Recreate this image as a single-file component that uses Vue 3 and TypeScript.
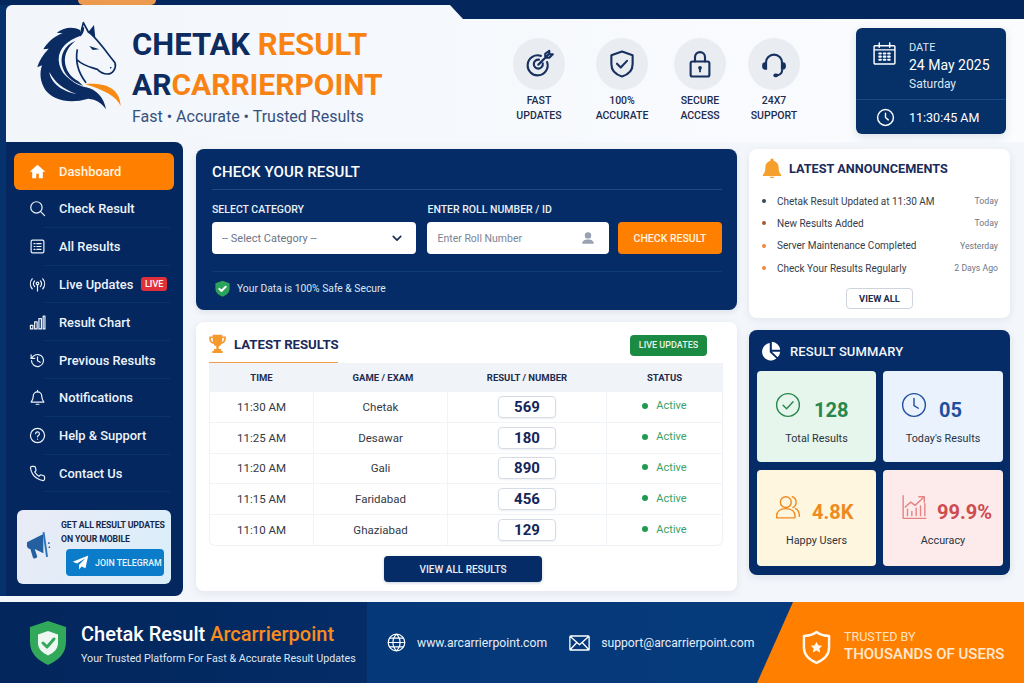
<script setup lang="ts">
interface NavItem { label: string; paths: string[]; active?: boolean; live?: boolean }
const circle = (cx: number, cy: number, r: number) =>
  `M${cx - r} ${cy}a${r} ${r} 0 1 0 ${r * 2} 0a${r} ${r} 0 1 0 ${-r * 2} 0z`

const nav: NavItem[] = [
  { label: 'Dashboard', active: true, paths: ['M12 2.500 1 12.500H4.500v9h5.700V15h3.600v6.500h5.700v-9H23z'] },
  { label: 'Check Result', paths: [circle(10.5, 10.5, 8), 'M16.500 16.500 22 22'] },
  { label: 'All Results', paths: ['M5 3h14a2 2 0 0 1 2 2v14a2 2 0 0 1-2 2H5a2 2 0 0 1-2-2V5a2 2 0 0 1 2-2z', 'M7 8h1.500M11 8h6M7 12h1.500M11 12h6M7 16h1.500M11 16h6'] },
  { label: 'Live Updates', live: true, paths: [circle(12, 10.5, 1.8), 'M12 12.500V21M8 7a6 6 0 0 0 0 8M16 7a6 6 0 0 1 0 8M4.500 4a11 11 0 0 0 0 14M19.500 4a11 11 0 0 1 0 14'] },
  { label: 'Result Chart', paths: ['M2 16h3.500v5H2zM8 11h3.500v10H8zM14 6.500h3.500V21H14zM20 3h2.500v18H20z'] },
  { label: 'Previous Results', paths: ['M3.500 12a8.500 8.500 0 1 0 2.600-6.100L3 9', 'M3 4v5h5M12 7v5.300l3.800 2.200'] },
  { label: 'Notifications', paths: ['M6 10a6 6 0 0 1 12 0c0 5 2 7 3 8.500H3c1-1.500 3-3.500 3-8.500z', 'M10 21.500h4M12 2v2'] },
  { label: 'Help & Support', paths: [circle(12, 12, 10), 'M9.300 9.500a2.700 2.700 0 1 1 4 2.400c-.9.500-1.300 1-1.300 2M12 17v.3'] },
  { label: 'Contact Us', paths: ['M22 16.920v3a2 2 0 0 1-2.180 2 19.790 19.790 0 0 1-8.630-3.070 19.500 19.500 0 0 1-6-6 19.790 19.790 0 0 1-3.070-8.670A2 2 0 0 1 4.110 2h3a2 2 0 0 1 2 1.720 12.840 12.840 0 0 0 .7 2.810 2 2 0 0 1-.45 2.110L8.090 9.910a16 16 0 0 0 6 6l1.270-1.270a2 2 0 0 1 2.110-.45 12.840 12.840 0 0 0 2.810.7A2 2 0 0 1 22 16.920z'] },
]

const features = [
  { a: 'FAST', b: 'UPDATES', paths: [ 'M18.500 10.500a8 8 0 1 1-5-5', 'M15 11.500a3.600 3.600 0 1 1-3-3', 'M11.500 12.500 20 4M17 3.800V7h3.200L23 4.200h-2.800V1.500z'] },
  { a: '100%', b: 'ACCURATE', paths: ['M12 2 20.500 5v7c0 5-3.500 8.500-8.500 10-5-1.500-8.500-5-8.500-10V5z', 'M8 11.800l3 3 5-5.300'] },
  { a: 'SECURE', b: 'ACCESS', paths: ['M6 10h12a1.500 1.500 0 0 1 1.500 1.500v9A1.500 1.500 0 0 1 18 22H6a1.500 1.500 0 0 1-1.500-1.500v-9A1.500 1.500 0 0 1 6 10z', 'M8 10V6.500a4 4 0 0 1 8 0V10'], solid: [circle(12, 15, 1.5), 'M11.300 15h1.400v3.500h-1.400z'] },
  { a: '24X7', b: 'SUPPORT', paths: ['M5.500 12v-1a6.500 6.500 0 0 1 13 0v1', 'M18.500 17c0 2.500-2.300 4-5 4'], solid: ['M5 10.500h1.500v6H5a2.500 2.500 0 0 1-2.500-2.500v-1A2.500 2.500 0 0 1 5 10.500z', 'M19 10.500h-1.500v6H19a2.500 2.500 0 0 0 2.500-2.500v-1a2.500 2.500 0 0 0-2.500-2.500z', 'M13 19.500h.8a1.500 1.500 0 0 1 0 3H13a1.500 1.500 0 0 1 0-3z'] },
]

const results = [
  { time: '11:30 AM', game: 'Chetak', num: '569' },
  { time: '11:25 AM', game: 'Desawar', num: '180' },
  { time: '11:20 AM', game: 'Gali', num: '890' },
  { time: '11:15 AM', game: 'Faridabad', num: '456' },
  { time: '11:10 AM', game: 'Ghaziabad', num: '129' },
]

const news = [
  { text: 'Chetak Result Updated at 11:30 AM', when: 'Today', tone: 'dark' },
  { text: 'New Results Added', when: 'Today', tone: 'brown' },
  { text: 'Server Maintenance Completed', when: 'Yesterday', tone: 'orange' },
  { text: 'Check Your Results Regularly', when: '2 Days Ago', tone: 'orange' },
]

const stats = [
  { value: '128', label: 'Total Results', tone: 'green', paths: [circle(12, 12, 10.5), 'M7.500 12.300l3.200 3.200 6-6.500'] },
  { value: '05', label: "Today's Results", tone: 'blue', paths: [circle(12, 12, 10.5), 'M12 6v6.500l4 2.500'] },
  { value: '4.8K', label: 'Happy Users', tone: 'amber', paths: [circle(10, 7.5, 5), 'M1.500 22v-1.500C1.500 16 5 13.500 10 13.500s8.500 2.500 8.500 7V22z', 'M16 2.500c2.500.8 3.500 3 3.500 5s-1 4-3 5M19 13.500c2.500 1 3.500 3.500 3.500 7'] },
  { value: '99.9%', label: 'Accuracy', tone: 'red', paths: ['M2 1.500V22.500H23', 'M6 20v-6M10 20v-4M14 20v-7M18 20v-9M22 20V9', 'M4 12l5-4.500 4 3L21 3', 'M16.500 2.500H21.500V7.500'] },
]
</script>

<template>
  <div class="page">
    <div class="topline"><span class="glow"></span></div>
    <div class="frame">
      <header class="head">
        <span class="wedge"></span>
        <div class="brand">
          <svg class="logo" viewBox="0 0 360 330" width="120" height="110" aria-label="Horse logo">
            <path fill="#0b2c63" d="M180 60C160 50 135 50 110 68L128 70C100 80 82 98 70 118L86 116C68 135 56 155 52 172L66 166C58 190 60 215 76 240C100 272 150 282 205 266C228 268 246 280 258 298C252 262 228 238 198 232C160 225 125 190 118 150C115 125 135 95 182 84Z"/>
            <path fill="#f3f6fb" d="M180 78 190 38 205 66C228 80 258 125 285 158C290 175 278 192 262 192C250 192 240 186 232 178C215 172 190 168 172 150C172 172 185 200 205 222L190 226C150 215 118 190 116 150C115 115 145 90 180 78Z"/>
            <path fill="#0b2c63" d="M166 93C134 106 120 134 126 165C132 195 156 216 190 228L175 214C150 200 138 180 135 158C132 132 145 110 166 93Z"/>
            <path fill="#f3f6fb" d="M88 186C92 218 125 244 170 252C130 238 105 218 88 186Z"/>
            <path fill="none" stroke="#0b2c63" stroke-width="5" stroke-linejoin="round" d="M180 78 190 38 205 66C228 80 258 125 285 158C290 175 278 192 262 192C250 192 240 186 232 178C215 172 190 168 172 150M172 118C166 150 170 182 198 218M181 76C188 70 190 62 190 52"/>
            <path fill="#0b2c63" d="M205 66 222 45 226 84ZM208 108 238 118 218 120ZM270 170l6 3-6 3z"/>
            <path fill="#f98b14" d="M195 222C240 218 300 225 302 288C290 258 250 240 195 222Z"/>
          </svg>
          <div class="brand-text">
            <div class="brand-line"><span class="navy">CHETAK</span> <span class="orange">RESULT</span></div>
            <div class="brand-line second"><span class="navy">AR</span><span class="orange">CARRIERPOINT</span></div>
            <div class="tagline">Fast • Accurate • Trusted Results</div>
          </div>
        </div>
        <div class="features">
          <div v-for="f in features" :key="f.a" class="feature">
            <span class="feature-icon">
              <svg viewBox="0 0 24 24" width="30" height="30" fill="none" stroke="#17305f" stroke-width="1.700" stroke-linecap="round" stroke-linejoin="round">
                <path v-for="p in f.paths" :key="p" :d="p"/>
                <path v-for="p in f.solid ?? []" :key="p" :d="p" fill="#17305f" stroke="none"/>
              </svg>
            </span>
            <span class="feature-label">{{ f.a }}<br>{{ f.b }}</span>
          </div>
        </div>
        <div class="date-card">
          <div class="date-top">
            <svg viewBox="0 0 24 24" width="25" height="25" fill="none" stroke="#fff" stroke-width="1.400" stroke-linecap="round">
              <path d="M3 4.500h18a1 1 0 0 1 1 1V21a1 1 0 0 1-1 1H3a1 1 0 0 1-1-1V5.500a1 1 0 0 1 1-1zM2 8.500h20M7 2v4M17 2v4"/>
              <path stroke-width="2" d="M7 12h1.500M11.300 12h1.500M15.500 12h1.500M7 15h1.500M11.300 15h1.500M15.500 15h1.500M7 18h1.500M11.300 18h1.500M15.500 18h1.500"/>
            </svg>
            <div class="date-text">
              <div class="date-cap">DATE</div>
              <div class="date-main">24 May 2025</div>
              <div class="date-day">Saturday</div>
            </div>
          </div>
          <div class="date-bottom">
            <svg viewBox="0 0 24 24" width="19" height="19" fill="none" stroke="#fff" stroke-width="1.800" stroke-linecap="round" stroke-linejoin="round">
              <path :d="circle(12, 12, 10)"/><path d="M12 6.500V12l3.500 3"/>
            </svg>
            <span class="date-time">11:30:45 AM</span>
          </div>
        </div>
      </header>

      <main class="main">
        <aside class="side">
          <nav class="nav">
            <a v-for="n in nav" :key="n.label" class="nav-item" :class="{ active: n.active }">
              <svg viewBox="0 0 24 24" width="17" height="17" :fill="n.active ? '#fff' : 'none'" :stroke="n.active ? 'none' : '#eef3fb'" stroke-width="1.700" stroke-linecap="round" stroke-linejoin="round">
                <path v-for="p in n.paths" :key="p" :d="p"/>
              </svg>
              <span>{{ n.label }}</span>
              <b v-if="n.live" class="live">LIVE</b>
            </a>
          </nav>
          <div class="promo">
            <svg class="mega" viewBox="0 0 28 30" width="27" height="29">
              <path fill="#24609f" d="M1 11.500 18 3v20L9 18.500l2.500 7.500a1.500 1.500 0 0 1-1 2l-1.500.4a1.500 1.500 0 0 1-1.800-1L4.500 18.500H4a3.500 3.500 0 0 1-3-3.500z"/>
              <path fill="#2b74ba" d="M19 1h2v26h-2z" transform="rotate(-8 20 14)"/>
              <path fill="#24609f" d="M23 11.500h1.500v2H23zM23.500 16h1.500v1.500h-1.500z"/>
            </svg>
            <div class="promo-body">
              <div class="promo-text">GET ALL RESULT UPDATES<br>ON YOUR MOBILE</div>
              <div class="tg-btn">
                <svg viewBox="0 0 24 24" width="17" height="17"><path fill="#fff" d="M23 2 1 11l6 2.500L19 6 10 15v7l3.500-4.500L19 20z"/></svg>
                <span>JOIN TELEGRAM</span>
              </div>
            </div>
          </div>
        </aside>

        <section class="center">
          <div class="check">
            <h2 class="check-title">CHECK YOUR RESULT</h2>
            <div class="check-form">
              <label class="field f1">
                <span>SELECT CATEGORY</span>
                <span class="box">
                  <em>-- Select Category --</em>
                  <svg viewBox="0 0 12 8" width="10" height="7" fill="none" stroke="#14294f" stroke-width="1.900" stroke-linecap="round" stroke-linejoin="round"><path d="M1.500 1.500 6 6l4.500-4.500"/></svg>
                </span>
              </label>
              <label class="field f2">
                <span>ENTER ROLL NUMBER / ID</span>
                <span class="box">
                  <em class="small">Enter Roll Number</em>
                  <svg viewBox="0 0 24 24" width="14" height="14" fill="#98a2b3"><path d="M12 2a5.500 5.500 0 1 1 0 11 5.500 5.500 0 0 1 0-11zM2 22c0-5 4-7.500 10-7.500S22 17 22 22z"/></svg>
                </span>
              </label>
              <button class="check-btn">CHECK RESULT</button>
            </div>
            <div class="safe">
              <svg viewBox="0 0 24 24" width="17" height="19"><path fill="#2ba35a" d="M12 1 22 4.500V12c0 5.500-4 9.500-10 11.500C6 21.500 2 17.500 2 12V4.500z"/><path fill="none" stroke="#fff" stroke-width="2.800" stroke-linecap="round" stroke-linejoin="round" d="M7.500 12.500l3 3 6-6"/></svg>
              <span>Your Data is 100% Safe &amp; Secure</span>
            </div>
          </div>

          <div class="latest">
            <div class="latest-head">
              <div class="latest-title">
                <svg viewBox="0 0 24 24" width="19" height="19"><path fill="#f5992c" d="M6 1h12v2h4.500v3c0 3.500-2.500 6-5.500 6.500-.8 1.500-2 2.500-3.500 3V19h3v2.500h2V24H5.500v-2.500h2V19h3v-3.500C9 15 7.800 14 7 12.500 4 12 1.500 9.500 1.500 6V3H6zM3.700 5v1c0 2 1.200 3.500 2.800 4.200C6.200 9 6 7 6 5zM20.300 5H18c0 2-.2 4-.5 5.200C19.100 9.500 20.300 8 20.300 6z"/></svg>
                <span>LATEST RESULTS</span>
              </div>
              <span class="pill">LIVE UPDATES</span>
            </div>
            <div class="table">
              <div class="tr th"><span>TIME</span><span class="game-h">GAME / EXAM</span><span>RESULT / NUMBER</span><span>STATUS</span></div>
              <div v-for="r in results" :key="r.num" class="tr">
                <span class="time">{{ r.time }}</span>
                <span class="game">{{ r.game }}</span>
                <span><b class="num">{{ r.num }}</b></span>
                <span class="status"><i></i><small>Active</small></span>
              </div>
            </div>
            <button class="all-btn">VIEW ALL RESULTS</button>
          </div>
        </section>

        <section class="right">
          <div class="ann">
            <div class="ann-title">
              <svg viewBox="0 0 24 24" width="20" height="20"><path fill="#f5a02c" d="M12 0.500a2 2 0 0 1 2 2v.8c3.800 1 6 4 6 8 0 4.700 1 6.700 3 8.700v1.500H1V20c2-2 3-4 3-8.700 0-4 2.200-7 6-8v-.8a2 2 0 0 1 2-2zM9 22.500h6a3 1.500 0 0 1-6 0z"/></svg>
              <span>LATEST ANNOUNCEMENTS</span>
            </div>
            <ul class="news">
              <li v-for="n in news" :key="n.text">
                <i :class="n.tone"></i><span class="news-text">{{ n.text }}</span><span class="news-when">{{ n.when }}</span>
              </li>
            </ul>
            <button class="view-all">VIEW ALL</button>
          </div>

          <div class="summary">
            <div class="summary-title">
              <svg viewBox="0 0 24 24" width="20" height="20"><path fill="#fff" d="M10.500 2.500V13.500L18.500 21A10.500 10.500 0 1 1 10.500 2.500zM13 1a10.500 10.500 0 0 1 10 9.500H13zM13 13h10a10.300 10.300 0 0 1-3 6.500z"/></svg>
              <span>RESULT SUMMARY</span>
            </div>
            <div class="stats">
              <div v-for="s in stats" :key="s.label" class="stat" :class="s.tone">
                <div class="stat-row">
                  <svg viewBox="0 0 24 24" width="26" height="26" fill="none" stroke="currentColor" stroke-width="1.300" stroke-linecap="round" stroke-linejoin="round">
                    <path v-for="p in s.paths" :key="p" :d="p"/>
                  </svg>
                  <strong>{{ s.value }}</strong>
                </div>
                <div class="stat-label">{{ s.label }}</div>
              </div>
            </div>
          </div>
        </section>
      </main>
    </div>

    <footer class="foot">
      <div class="foot-brand">
        <svg viewBox="0 0 38 46" width="38" height="46">
          <path fill="#31a85a" d="M19 1 37 7v15c0 11-7 18-18 23C8 40 1 33 1 22V7z"/>
          <path fill="#eef7f1" d="M19 11l10 3.500v8.500c0 6-4 9.500-10 12.500-6-3-10-6.500-10-12.500v-8.500z"/>
          <path fill="none" stroke="#31a85a" stroke-width="3" stroke-linecap="round" stroke-linejoin="round" d="M14 23l4 4 7-8"/>
        </svg>
        <div>
          <div class="foot-title">Chetak Result <span>Arcarrierpoint</span></div>
          <div class="foot-sub">Your Trusted Platform For Fast &amp; Accurate Result Updates</div>
        </div>
      </div>
      <div class="foot-contact">
        <svg viewBox="0 0 24 24" width="19" height="19" fill="none" stroke="#fff" stroke-width="1.500"><path :d="circle(12, 12, 10.5)"/><path d="M1.500 12h21M3 6.500h18M3 17.500h18M12 1.500c-6 6-6 15 0 21M12 1.500c6 6 6 15 0 21"/></svg>
        <span class="site">www.arcarrierpoint.com</span>
        <svg viewBox="0 0 24 18" width="21" height="16" fill="none" stroke="#fff" stroke-width="1.500" stroke-linejoin="round"><path d="M2 1h20a1 1 0 0 1 1 1v14a1 1 0 0 1-1 1H2a1 1 0 0 1-1-1V2a1 1 0 0 1 1-1zM1.500 1.500 12 11 22.500 1.500M1.500 16.500 9 8.500M22.500 16.500 15 8.500"/></svg>
        <span>support@arcarrierpoint.com</span>
      </div>
      <div class="foot-trust">
        <svg viewBox="0 0 30 36" width="29" height="35"><path fill="none" stroke="#fff8f0" stroke-width="2.500" stroke-linejoin="round" d="M15 2C18 4.500 23 6 28 6v12c0 7-5 12.500-13 16C7 30.500 2 25 2 18V6c5 0 10-1.500 13-4z"/><path fill="#fff8f0" d="m15 12 1.800 3.800 4.200.5-3.100 2.800.9 4.200-3.800-2.200-3.800 2.200.9-4.200-3.100-2.800 4.200-.5z"/></svg>
        <div>
          <div class="trust-cap">TRUSTED BY</div>
          <div class="trust-main">THOUSANDS OF USERS</div>
        </div>
      </div>
    </footer>
  </div>
</template>

<style>
html, body { margin: 0; padding: 0; background: #f3f6fa; }
</style>

<style scoped>
* { box-sizing: border-box; }
.page { width: 1024px; height: 683px; overflow: hidden; display: flex; flex-direction: column; font-family: Roboto, "Liberation Sans", sans-serif; background: #f3f6fa; }
.topline { height: 5px; background: #03265c; position: relative; flex: none; }
.glow { position: absolute; left: 78px; top: 0; width: 78px; height: 5px; background: #ec9a4e; border-radius: 0 0 10px 10px; }
.frame { height: 597px; flex: none; background: linear-gradient(#05316d 0 591px, #f3f6fa 591px); padding-left: 6px; display: flex; flex-direction: column; }
.head { height: 137px; flex: none; position: relative; background: linear-gradient(90deg, #f2f6fb, #fbfcfe); border-top-left-radius: 6px; display: flex; align-items: flex-start; }
.wedge { position: absolute; right: 0; top: 0; width: 574px; height: 14px; background: #03265c; clip-path: polygon(0 0, 100% 0, 100% 100%, 13px 100%); }
.brand { display: flex; width: 491px; padding: 5px 0 0 14px; flex: none; }
.logo { flex: none; margin-right: -8px; }
.brand-text { margin-top: 15px; }
.brand-line { font-size: 31px; font-weight: 700; line-height: 39.500px; white-space: nowrap; }
.brand-line.second { font-size: 30px; }
.navy { color: #0c2b5e; }
.orange { color: #f98312; }
.tagline { color: #35517d; font-size: 16px; line-height: 22px; margin-top: 2px; white-space: nowrap; }
.features { display: grid; grid-template-columns: 84px 82px 74px 74px; margin-top: 33px; flex: none; }
.feature { display: flex; flex-direction: column; align-items: center; }
.feature-icon { width: 52px; height: 52px; border-radius: 50%; background: #e9edf2; display: flex; align-items: center; justify-content: center; }
.feature-label { margin-top: 4px; font-size: 10.500px; line-height: 14.500px; font-weight: 500; text-align: center; color: #1d2c4f; white-space: nowrap; }
.date-card { position: absolute; left: 850px; top: 23px; width: 150px; height: 106px; background: #053068; border-radius: 6px; color: #fff; box-shadow: 0 3px 8px rgba(20, 50, 90, .12); }
.date-top { height: 72px; padding: 13px 0 0 16px; display: flex; gap: 12px; border-bottom: 1px solid #1c4a84; }
.date-cap { font-size: 11px; line-height: 14px; color: #dbe6f3; }
.date-main { font-size: 14px; line-height: 19px; margin-top: 1px; font-weight: 400; white-space: nowrap; }
.date-day { font-size: 12px; line-height: 16px; margin-top: 1px; color: #dbe6f3; }
.date-bottom { display: flex; align-items: center; gap: 14px; padding: 8px 0 0 20px; }
.date-time { font-size: 12.500px; font-weight: 400; }
.main { flex: 1; min-height: 0; display: grid; grid-template-columns: 177px 542px 261px; column-gap: 12px; background: #f3f6fa; align-items: start; }
.side { height: 454px; background: #03275e; border-radius: 0 8px 8px 0; padding: 11px 9px 12px 8px; display: flex; flex-direction: column; }
.nav { display: flex; flex-direction: column; }
.nav-item { height: 37.800px; flex: none; display: flex; align-items: center; color: #eef3fb; font-size: 12.900px; font-weight: 500; padding-left: 15px; gap: 13px; position: relative; white-space: nowrap; border-radius: 6px; }
.nav-item + .nav-item::after { content: ""; position: absolute; left: 30px; right: 4px; bottom: 0; height: 1px; background: #0a326d; }
.nav-item.active { height: 37px; background: #ff8000; color: #fff3e0; }
.live { position: absolute; left: 127px; background: #e0303a; color: #fff; border-radius: 3px; font-size: 9px; font-weight: 500; padding: 2px 4px; line-height: 10px; }
.promo { margin: auto 3px 0 3px; height: 74px; border-radius: 6px; background: linear-gradient(120deg, #e9ebf6, #d9eefa); display: flex; gap: 8px; padding: 8px 6px 8px 9px; }
.mega { flex: none; margin-top: 13px; }
.promo-body { display: flex; flex-direction: column; align-items: flex-end; min-width: 0; }
.promo-text { font-size: 8.700px; font-weight: 700; color: #17284a; line-height: 14px; letter-spacing: -.1px; width: 103px; white-space: nowrap; }
.tg-btn { margin-top: 3px; width: 98px; height: 28px; background: #0b7cc9; border-radius: 4px; display: flex; align-items: center; gap: 6px; padding-left: 6px; color: #e9f4fc; font-size: 8.800px; font-weight: 500; white-space: nowrap; }
.center { display: flex; flex-direction: column; gap: 12px; padding: 7px 0 0 1px; }
.check { height: 161px; background: #052c66; border-radius: 8px; padding: 0 15px 0 16px; color: #fff; box-shadow: 0 2px 6px rgba(20, 50, 90, .1); }
.check-title { margin: 0; height: 41px; line-height: 46px; font-size: 15px; font-weight: 500; border-bottom: 1px solid #1c4a84; letter-spacing: .1px; }
.check-form { height: 82px; display: flex; align-items: flex-start; padding-top: 13px; border-bottom: 1px solid #0e3a76; }
.field { display: flex; flex-direction: column; gap: 6px; font-size: 10.500px; font-weight: 500; line-height: 13px; color: #eaf0f8; white-space: nowrap; }
.f1 { width: 205px; margin-right: 11px; }
.f2 { width: 182px; margin-right: 9px; }
.box { height: 32px; background: #fff; border-radius: 4px; display: flex; align-items: center; justify-content: space-between; padding: 0 14px 0 10px; }
.box em { font-style: normal; font-size: 11px; color: #6d7586; font-weight: 400; }
.box em.small { font-size: 10.500px; color: #7d8494; }
.check-btn { margin-top: 19px; width: 104px; height: 32px; flex: none; border: 0; border-radius: 4px; background: #ff8000; color: #fff3e0; font: 500 10.500px Roboto, sans-serif; }
.safe { display: flex; align-items: center; gap: 6px; padding: 7px 0 0 2px; font-size: 10.300px; color: #dde6f2; }
.latest { height: 269px; background: #fff; border-radius: 8px; padding: 13px 14px 0 13px; box-shadow: 0 2px 8px rgba(20, 50, 90, .08); display: flex; flex-direction: column; align-items: center; }
.latest-head { width: 100%; height: 28px; display: flex; justify-content: space-between; align-items: flex-start; padding-right: 16px; flex: none; }
.latest-title { height: 28px; width: 129px; display: flex; gap: 7px; color: #1a2a5a; font-size: 13.200px; font-weight: 700; white-space: nowrap; border-bottom: 1px solid #f09a4a; align-items: flex-start; line-height: 20px; }
.latest-title svg { margin-top: -1px; margin-left: -1px; flex: none; }
.pill { background: #1b8a42; color: #e5f5ea; height: 21px; width: 77px; border-radius: 4px; text-align: center; line-height: 21px; font-size: 9px; font-weight: 500; }
.table { width: 100%; height: 183px; margin-top: 0; border: 1px solid #eef1f6; border-top: 0; border-radius: 0 0 6px 6px; overflow: hidden; flex: none; }
.tr { display: grid; grid-template-columns: 104px 134px 159px 1fr; height: 30.800px; border-top: 1px solid #f0f3f7; text-align: center; align-items: center; font-size: 11.500px; color: #333a45; }
.tr > span { height: 100%; display: flex; align-items: center; justify-content: center; border-right: 1px solid #f0f3f7; }
.tr > span:last-child { border-right: 0; }
.th { height: 28px; border-top: 0; background: #f0f4f9; font-size: 9.500px; font-weight: 700; color: #1d2c4f; }
.th .game-h { padding-left: 5px; }
.num { width: 58px; height: 22px; border: 1px solid #d6dce5; border-radius: 4px; color: #14265a; font-size: 15px; font-weight: 700; line-height: 20px; box-shadow: 0 1px 2px rgba(20, 50, 90, .08); }
.tr > .status { gap: 8px; padding-right: 0; }
.status small { color: #3aa266; font-size: 11px; margin-top: -2px; }
.status i { width: 6px; height: 6px; border-radius: 50%; background: #1f9a50; margin-top: -2px; }
.all-btn { margin-top: 10px; width: 158px; height: 26px; background: #052c66; border: 0; border-radius: 4px; color: #e8eef7; font: 500 10px Roboto, sans-serif; margin-left: -6px; box-shadow: 0 1px 3px rgba(20, 50, 90, .25); }
.right { display: flex; flex-direction: column; gap: 12px; padding-top: 7px; }
.ann { height: 169px; background: #fff; border-radius: 8px; padding: 9px 12px 0 14px; box-shadow: 0 2px 8px rgba(20, 50, 90, .08); display: flex; flex-direction: column; align-items: center; }
.ann-title { width: 100%; display: flex; align-items: center; gap: 7px; color: #1a2a5a; font-size: 12.700px; font-weight: 700; height: 20px; white-space: nowrap; }
.ann-title svg { margin-left: -1px; }
.news { list-style: none; margin: 12px 0 0; padding: 0; width: 100%; flex: none; }
.news li { height: 22.300px; display: flex; align-items: center; font-size: 10px; color: #343c4b; }
.news i { width: 4px; height: 4px; border-radius: 50%; margin-right: 10px; flex: none; margin-left: -1px; }
.news i.dark { background: #3b4657; }
.news i.brown { background: #a65a35; }
.news i.orange { background: #ef8a3d; }
.news-text { flex: 1; white-space: nowrap; margin-left: 1px; }
.news-when { font-size: 8.700px; color: #6e7686; }
.view-all { margin-top: 9px; width: 67px; height: 21px; border: 1px solid #ced4de; background: #fff; border-radius: 4px; color: #1d2c4f; font: 700 9.300px Roboto, sans-serif; margin-left: -2px; }
.summary { height: 245px; background: #052c66; border-radius: 8px; padding: 0 7px 0 8px; box-shadow: 0 2px 8px rgba(20, 50, 90, .1); }
.summary-title { height: 41px; display: flex; align-items: center; gap: 9px; color: #f3f6fb; font-size: 13px; font-weight: 500; padding: 1px 0 0 4px; letter-spacing: .1px; }
.stats { display: grid; grid-template-columns: 119px 120px; grid-template-rows: 91px 96px; gap: 8px 7px; }
.stat { border-radius: 4px; display: flex; flex-direction: column; padding-top: 20px; }
.stat-row { display: flex; align-items: center; height: 36px; padding-left: 18px; }
.stat-row svg { margin-top: -8px; flex: none; }
.stat-row strong { font-size: 20px; font-weight: 700; margin-top: 2px; }
.stat-label { margin-top: 5px; font-size: 10.800px; color: #2a3340; text-align: center; }
.stat.green { background: #e6f6ec; color: #26884c; }
.stat.blue { background: #e9f2fd; color: #1f4f9e; }
.stat.green strong { margin-left: 13px; }
.stat.blue strong { margin-left: 12px; }
.stat.amber { background: #fff6df; color: #ee8a1e; padding-top: 23px; }
.stat.red { background: #fdeaea; color: #cd4c4f; padding-top: 23px; }
.stat.amber strong { margin-left: 11px; }
.stat.red strong { margin-left: 10px; }
.stat.red svg { color: #e58385; }
.foot { height: 81px; flex: none; background: linear-gradient(90deg, #053675, #053c7e); display: flex; color: #fff; }
.foot-brand { width: 367px; flex: none; background: linear-gradient(90deg, #03265c, #042c66); display: flex; align-items: center; gap: 14px; padding: 0 0 0 29px; }
.foot-title { font-size: 20px; font-weight: 500; line-height: 26px; white-space: nowrap; }
.foot-title span { color: #f98c1e; }
.foot-sub { font-size: 10.700px; margin-top: 5px; color: #dfe7f2; white-space: nowrap; }
.foot-contact { flex: 1; display: flex; align-items: center; font-size: 12.200px; color: #e6edf7; padding-left: 20px; white-space: nowrap; }
.foot-contact svg { flex: none; }
.foot-contact span { margin-left: 11px; }
.foot-contact .site { margin-right: 22px; }
.foot-trust { width: 267px; flex: none; background: #ff8000; clip-path: polygon(36px 0, 100% 0, 100% 100%, 0 100%); display: flex; align-items: center; gap: 13px; padding: 9px 0 0 45px; }
.trust-cap { font-size: 12.500px; line-height: 15px; color: #ffe3c4; }
.trust-main { font-size: 15px; font-weight: 500; line-height: 21px; color: #ffe9d2; white-space: nowrap; }
</style>
